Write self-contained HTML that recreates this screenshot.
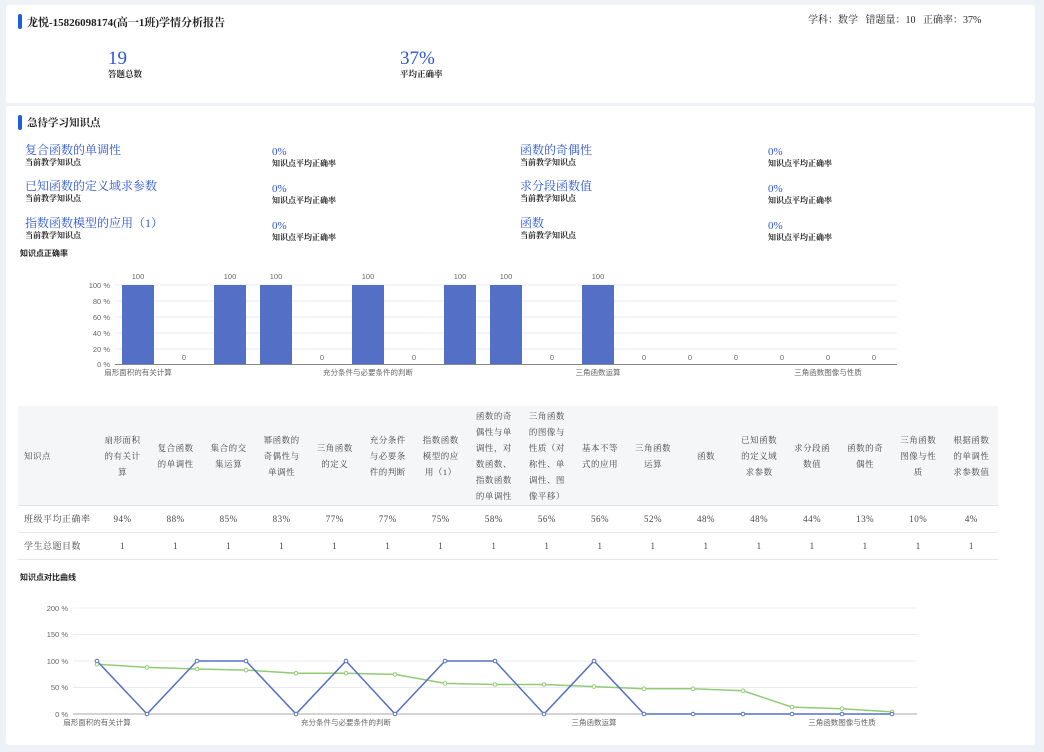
<!DOCTYPE html>
<html><head><meta charset="utf-8"><style>
body{margin:0;width:1044px;height:752px;background:#eef1f6;font-family:"Liberation Serif","Noto Serif CJK SC",serif;color:#222;position:relative;overflow:hidden}
.card{position:absolute;left:6px;width:1029px;background:#fff;border-radius:3px}
.t{position:absolute;font-size:11px;line-height:1.15;white-space:nowrap}
.bar{position:absolute;width:4px;height:15px;background:#1a5fe0;border-radius:2px}
.blue{color:#2b56d6}
.s{font-family:"Liberation Sans","Noto Sans CJK SC",sans-serif}
table{position:absolute;left:18px;top:406px;width:980px;border-collapse:collapse;font-size:8.5px;color:#444;table-layout:fixed}
td{text-align:center;line-height:16px;padding:0 5px;color:#444;letter-spacing:0.5px}
tr.h td{background:#f5f6f8;height:99px;border-bottom:1px solid #dde3ea}
tr.r td{height:26px;border-bottom:1px solid #e4e8ee;font-size:9px}
td:first-child{text-align:left;padding-left:6px}
</style></head><body>
<div class="card" style="top:5px;height:98px"></div>
<div class="card" style="top:106px;height:639px"></div>
<div class="bar" style="left:18px;top:14px"></div>
<div class="t" style="left:27px;top:17px;font-size:11px;font-weight:bold">龙悦-15826098174(高一1班)学情分析报告</div>
<div class="t" style="left:808px;top:15px;font-size:10px">学科：数学 &nbsp; 错题量：10 &nbsp; 正确率：37%</div>
<div class="t blue" style="left:108px;top:48px;font-size:19px">19</div>
<div class="t" style="left:108px;top:70px;font-size:8.5px;font-weight:bold">答题总数</div>
<div class="t blue" style="left:400px;top:48px;font-size:19px">37%</div>
<div class="t" style="left:400px;top:70px;font-size:8.5px;font-weight:bold">平均正确率</div>
<div class="bar" style="left:18px;top:115px"></div>
<div class="t" style="left:27px;top:118px;font-size:10.5px;font-weight:bold">急待学习知识点</div>

<div class="t blue" style="left:25px;top:144px;font-size:12px">复合函数的单调性</div><div class="t" style="left:25px;top:158px;font-size:8px;font-weight:bold">当前教学知识点</div>
<div class="t blue" style="left:272px;top:146px;font-size:11px">0%</div><div class="t" style="left:272px;top:159px;font-size:8px;font-weight:bold">知识点平均正确率</div>
<div class="t blue" style="left:520px;top:144px;font-size:12px">函数的奇偶性</div><div class="t" style="left:520px;top:158px;font-size:8px;font-weight:bold">当前教学知识点</div>
<div class="t blue" style="left:768px;top:146px;font-size:11px">0%</div><div class="t" style="left:768px;top:159px;font-size:8px;font-weight:bold">知识点平均正确率</div>

<div class="t blue" style="left:25px;top:180px;font-size:12px">已知函数的定义域求参数</div><div class="t" style="left:25px;top:194px;font-size:8px;font-weight:bold">当前教学知识点</div>
<div class="t blue" style="left:272px;top:183px;font-size:11px">0%</div><div class="t" style="left:272px;top:196px;font-size:8px;font-weight:bold">知识点平均正确率</div>
<div class="t blue" style="left:520px;top:180px;font-size:12px">求分段函数值</div><div class="t" style="left:520px;top:194px;font-size:8px;font-weight:bold">当前教学知识点</div>
<div class="t blue" style="left:768px;top:183px;font-size:11px">0%</div><div class="t" style="left:768px;top:196px;font-size:8px;font-weight:bold">知识点平均正确率</div>

<div class="t blue" style="left:25px;top:217px;font-size:12px">指数函数模型的应用（1）</div><div class="t" style="left:25px;top:231px;font-size:8px;font-weight:bold">当前教学知识点</div>
<div class="t blue" style="left:272px;top:220px;font-size:11px">0%</div><div class="t" style="left:272px;top:233px;font-size:8px;font-weight:bold">知识点平均正确率</div>
<div class="t blue" style="left:520px;top:217px;font-size:12px">函数</div><div class="t" style="left:520px;top:231px;font-size:8px;font-weight:bold">当前教学知识点</div>
<div class="t blue" style="left:768px;top:220px;font-size:11px">0%</div><div class="t" style="left:768px;top:233px;font-size:8px;font-weight:bold">知识点平均正确率</div>

<div class="t s" style="left:20px;top:249px;font-size:8px;font-weight:bold">知识点正确率</div>
<svg style="position:absolute;left:0;top:260px" width="1044" height="120" font-family="Liberation Sans,Noto Sans CJK SC,sans-serif" font-size="7.5" fill="#666">
<g stroke="#e8ebf3" stroke-width="1">
<line x1="115" x2="897" y1="25" y2="25"/><line x1="115" x2="897" y1="41" y2="41"/><line x1="115" x2="897" y1="57" y2="57"/><line x1="115" x2="897" y1="73" y2="73"/><line x1="115" x2="897" y1="89" y2="89"/></g>
<line x1="115" x2="897" y1="104.5" y2="104.5" stroke="#888"/>
<g text-anchor="end"><text x="110" y="28">100 %</text><text x="110" y="44">80 %</text><text x="110" y="60">60 %</text><text x="110" y="76">40 %</text><text x="110" y="92">20 %</text><text x="110" y="107">0 %</text></g>
<g fill="#5470c6"><rect x="122" y="25" width="32" height="79"/><rect x="214" y="25" width="32" height="79"/><rect x="260" y="25" width="32" height="79"/><rect x="352" y="25" width="32" height="79"/><rect x="444" y="25" width="32" height="79"/><rect x="490" y="25" width="32" height="79"/><rect x="582" y="25" width="32" height="79"/></g>
<g text-anchor="middle"><text x="138" y="19">100</text><text x="230" y="19">100</text><text x="276" y="19">100</text><text x="368" y="19">100</text><text x="460" y="19">100</text><text x="506" y="19">100</text><text x="598" y="19">100</text>
<text x="184" y="100">0</text><text x="322" y="100">0</text><text x="414" y="100">0</text><text x="552" y="100">0</text><text x="644" y="100">0</text><text x="690" y="100">0</text><text x="736" y="100">0</text><text x="782" y="100">0</text><text x="828" y="100">0</text><text x="874" y="100">0</text>
<text x="138" y="115">扇形面积的有关计算</text><text x="368" y="115">充分条件与必要条件的判断</text><text x="598" y="115">三角函数运算</text><text x="828" y="115">三角函数图像与性质</text></g>
</svg>

<table>
<colgroup><col style="width:78px"><col span="17"></colgroup>
<tr class="h"><td>知识点</td><td>扇形面积的有关计算</td><td>复合函数的单调性</td><td>集合的交集运算</td><td>幂函数的奇偶性与单调性</td><td>三角函数的定义</td><td>充分条件与必要条件的判断</td><td>指数函数模型的应用（1）</td><td>函数的奇偶性与单调性，对数函数、指数函数的单调性</td><td>三角函数的图像与性质（对称性、单调性、图像平移）</td><td>基本不等式的应用</td><td>三角函数运算</td><td>函数</td><td>已知函数的定义域求参数</td><td>求分段函数值</td><td>函数的奇偶性</td><td>三角函数图像与性质</td><td>根据函数的单调性求参数值</td></tr>
<tr class="r"><td>班级平均正确率</td><td>94%</td><td>88%</td><td>85%</td><td>83%</td><td>77%</td><td>77%</td><td>75%</td><td>58%</td><td>56%</td><td>56%</td><td>52%</td><td>48%</td><td>48%</td><td>44%</td><td>13%</td><td>10%</td><td>4%</td></tr>
<tr class="r"><td>学生总题目数</td><td>1</td><td>1</td><td>1</td><td>1</td><td>1</td><td>1</td><td>1</td><td>1</td><td>1</td><td>1</td><td>1</td><td>1</td><td>1</td><td>1</td><td>1</td><td>1</td><td>1</td></tr>
</table>

<div class="t s" style="left:20px;top:573px;font-size:8px;font-weight:bold">知识点对比曲线</div>
<svg style="position:absolute;left:0;top:595px" width="1044" height="140" font-family="Liberation Sans,Noto Sans CJK SC,sans-serif" font-size="7.5" fill="#666">
<g stroke="#e8ebf3"><line x1="73" x2="917" y1="13" y2="13"/><line x1="73" x2="917" y1="39.5" y2="39.5"/><line x1="73" x2="917" y1="66" y2="66"/><line x1="73" x2="917" y1="92.5" y2="92.5"/></g>
<line x1="73" x2="917" y1="119" y2="119" stroke="#aaa"/>
<g text-anchor="end"><text x="68" y="16">200 %</text><text x="68" y="42">150 %</text><text x="68" y="69">100 %</text><text x="68" y="95">50 %</text><text x="68" y="122">0 %</text></g>
<g text-anchor="middle"><text x="97" y="130">扇形面积的有关计算</text><text x="346" y="130">充分条件与必要条件的判断</text><text x="594" y="130">三角函数运算</text><text x="842" y="130">三角函数图像与性质</text></g>
<polyline fill="none" stroke="#91cc75" stroke-width="1.5" points="97,69.2 147,72.4 197,74 246,75.1 296,78.3 346,78.3 395,79.4 445,88.4 495,89.5 544,89.5 594,91.6 644,93.7 693,93.7 743,95.8 792,112.1 842,113.7 892,116.9"/>
<polyline fill="none" stroke="#5470c6" stroke-width="1.5" points="97,66 147,119 197,66 246,66 296,119 346,66 395,119 445,66 495,66 544,119 594,66 644,119 693,119 743,119 792,119 842,119 892,119"/>
<g fill="#fff" stroke="#91cc75"><circle cx="97" cy="69.2" r="1.8"/><circle cx="147" cy="72.4" r="1.8"/><circle cx="197" cy="74" r="1.8"/><circle cx="246" cy="75.1" r="1.8"/><circle cx="296" cy="78.3" r="1.8"/><circle cx="346" cy="78.3" r="1.8"/><circle cx="395" cy="79.4" r="1.8"/><circle cx="445" cy="88.4" r="1.8"/><circle cx="495" cy="89.5" r="1.8"/><circle cx="544" cy="89.5" r="1.8"/><circle cx="594" cy="91.6" r="1.8"/><circle cx="644" cy="93.7" r="1.8"/><circle cx="693" cy="93.7" r="1.8"/><circle cx="743" cy="95.8" r="1.8"/><circle cx="792" cy="112.1" r="1.8"/><circle cx="842" cy="113.7" r="1.8"/><circle cx="892" cy="116.9" r="1.8"/></g>
<g fill="#fff" stroke="#5470c6"><circle cx="97" cy="66" r="1.8"/><circle cx="147" cy="119" r="1.8"/><circle cx="197" cy="66" r="1.8"/><circle cx="246" cy="66" r="1.8"/><circle cx="296" cy="119" r="1.8"/><circle cx="346" cy="66" r="1.8"/><circle cx="395" cy="119" r="1.8"/><circle cx="445" cy="66" r="1.8"/><circle cx="495" cy="66" r="1.8"/><circle cx="544" cy="119" r="1.8"/><circle cx="594" cy="66" r="1.8"/><circle cx="644" cy="119" r="1.8"/><circle cx="693" cy="119" r="1.8"/><circle cx="743" cy="119" r="1.8"/><circle cx="792" cy="119" r="1.8"/><circle cx="842" cy="119" r="1.8"/><circle cx="892" cy="119" r="1.8"/></g>
</svg>
</body></html>
